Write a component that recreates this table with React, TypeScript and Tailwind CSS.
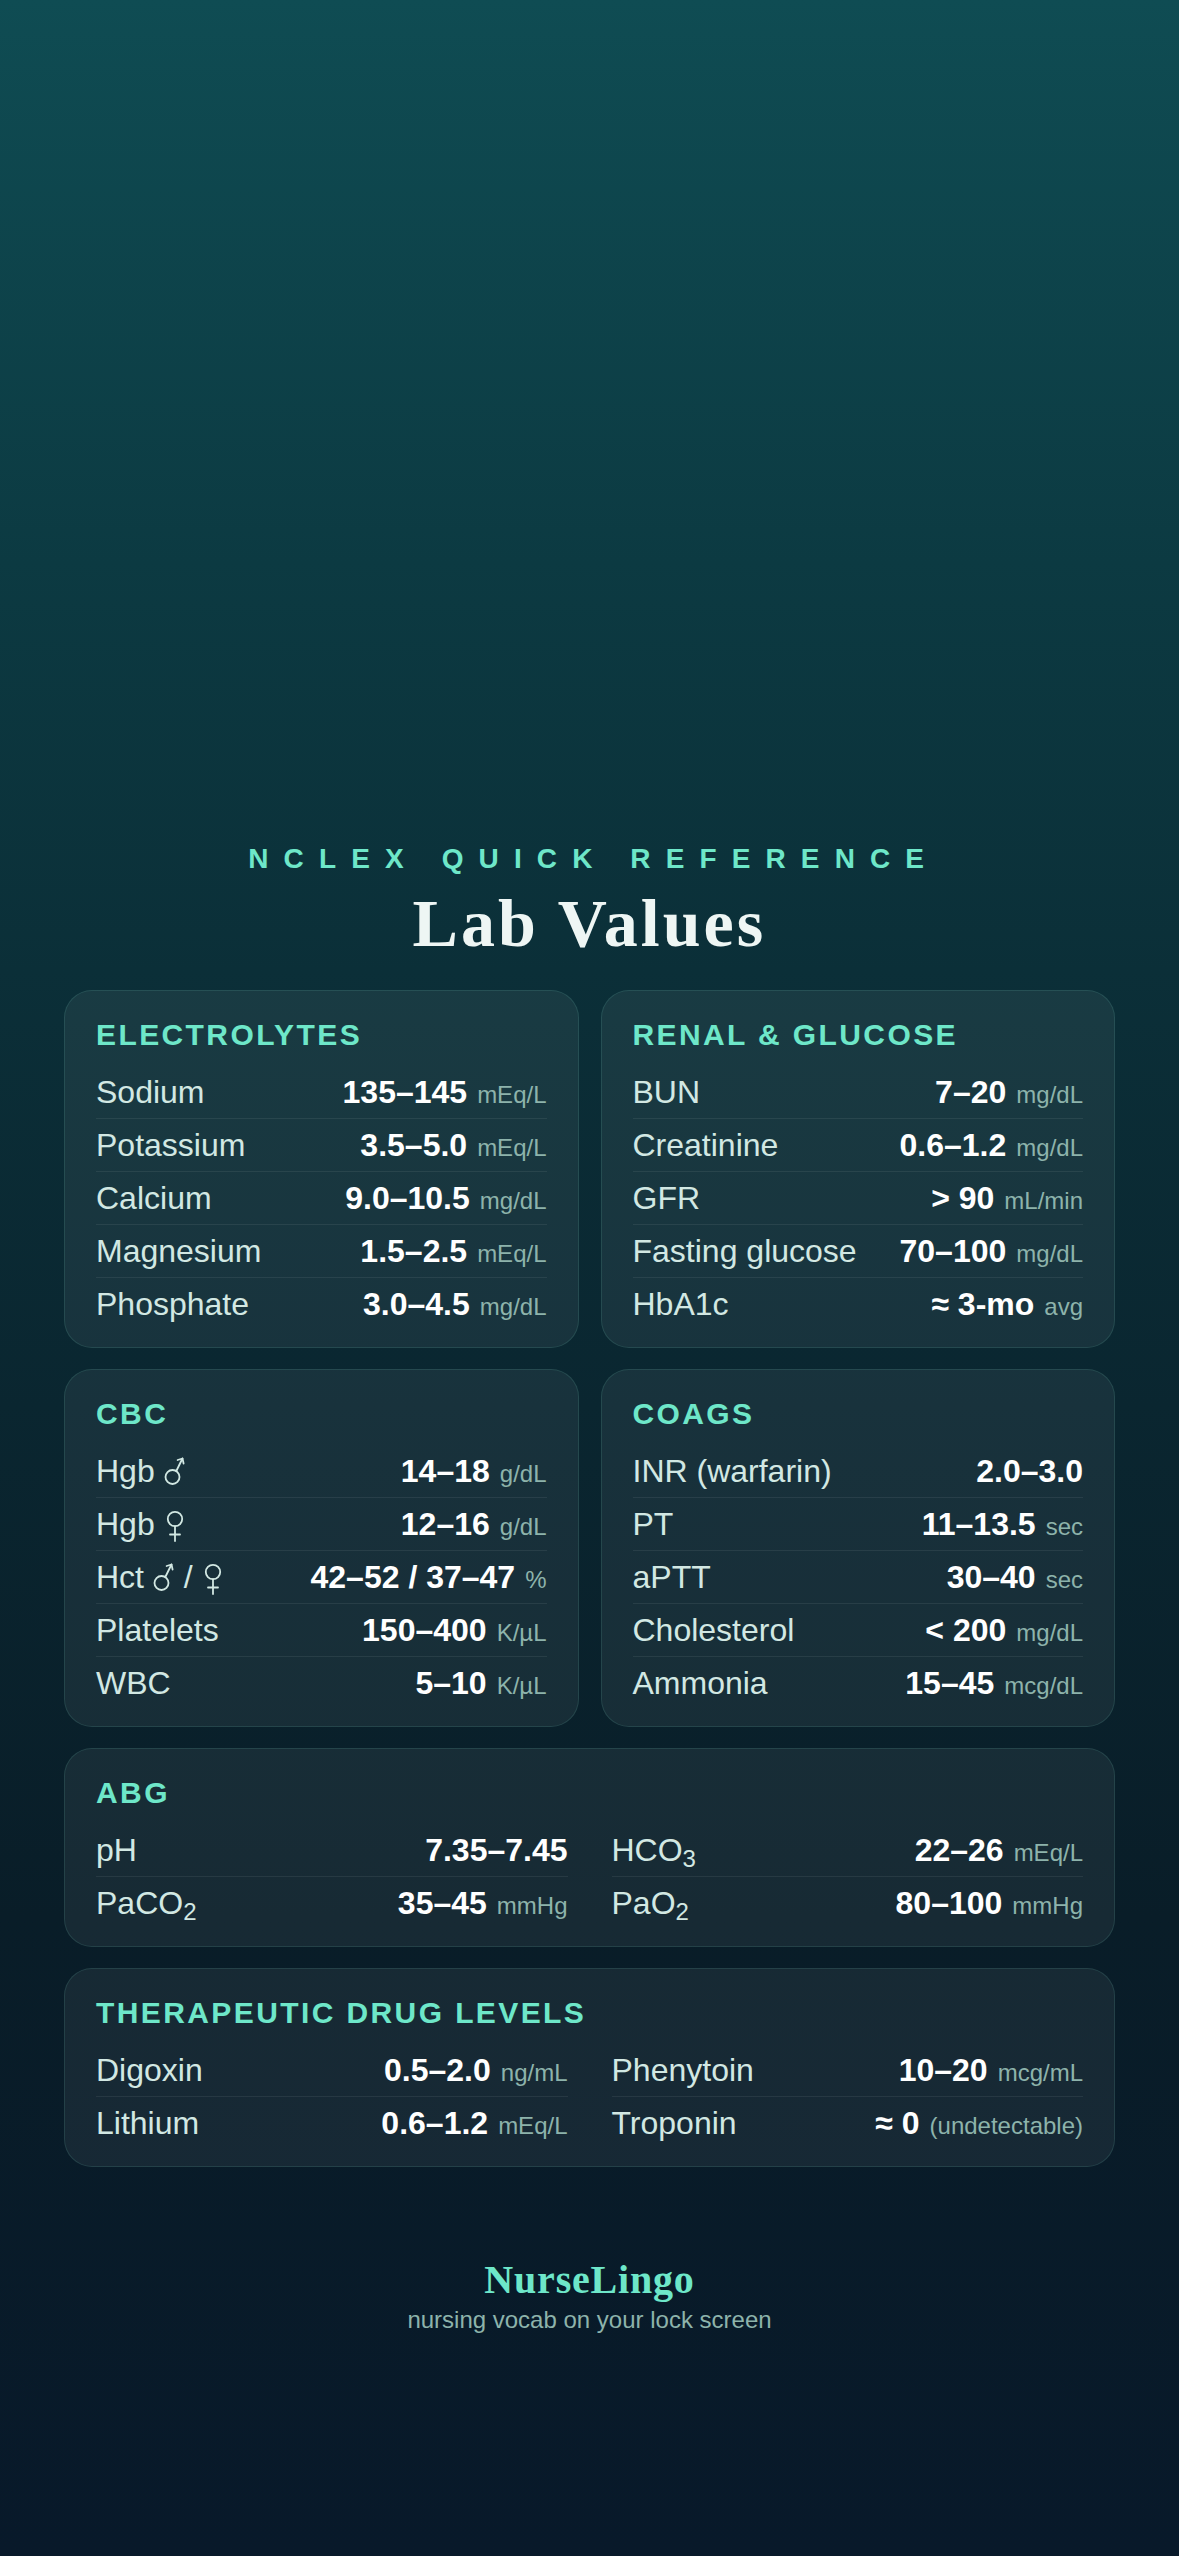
import React from 'react';

type Row = { label: React.ReactNode; value: string; unit?: string };

// thin gender marks, drawn to match the light glyphs in the design
const Male = () => (
    <svg viewBox="0 0 22 30" className="inline-block w-[22px] h-[30px] align-[-4px]" fill="none" stroke="#d2e8e3" strokeWidth="1.8" strokeLinecap="round" strokeLinejoin="round">
        <circle cx="8.5" cy="21" r="7" />
        <path d="M12.3 15 L18.5 2.5" />
        <path d="M13.6 4 L18.5 2.5 L19.6 7.5" />
    </svg>
);

const Female = () => (
    <svg viewBox="0 0 22 32" className="inline-block w-[22px] h-[32px] align-[-7px]" fill="none" stroke="#d2e8e3" strokeWidth="1.8" strokeLinecap="round">
        <circle cx="11" cy="9" r="7.2" />
        <path d="M11 16.2 V31" />
        <path d="M6 24.5 H16" />
    </svg>
);

const topCards: { title: string; rows: Row[] }[] = [
    {
        title: 'ELECTROLYTES',
        rows: [
            { label: 'Sodium', value: '135–145', unit: 'mEq/L' },
            { label: 'Potassium', value: '3.5–5.0', unit: 'mEq/L' },
            { label: 'Calcium', value: '9.0–10.5', unit: 'mg/dL' },
            { label: 'Magnesium', value: '1.5–2.5', unit: 'mEq/L' },
            { label: 'Phosphate', value: '3.0–4.5', unit: 'mg/dL' },
        ],
    },
    {
        title: 'RENAL & GLUCOSE',
        rows: [
            { label: 'BUN', value: '7–20', unit: 'mg/dL' },
            { label: 'Creatinine', value: '0.6–1.2', unit: 'mg/dL' },
            { label: 'GFR', value: '> 90', unit: 'mL/min' },
            { label: 'Fasting glucose', value: '70–100', unit: 'mg/dL' },
            { label: 'HbA1c', value: '≈ 3-mo', unit: 'avg' },
        ],
    },
    {
        title: 'CBC',
        rows: [
            { label: <>Hgb <Male /></>, value: '14–18', unit: 'g/dL' },
            { label: <>Hgb <Female /></>, value: '12–16', unit: 'g/dL' },
            { label: <>Hct <Male /> / <Female /></>, value: '42–52 / 37–47', unit: '%' },
            { label: 'Platelets', value: '150–400', unit: 'K/µL' },
            { label: 'WBC', value: '5–10', unit: 'K/µL' },
        ],
    },
    {
        title: 'COAGS',
        rows: [
            { label: 'INR (warfarin)', value: '2.0–3.0' },
            { label: 'PT', value: '11–13.5', unit: 'sec' },
            { label: 'aPTT', value: '30–40', unit: 'sec' },
            { label: 'Cholesterol', value: '< 200', unit: 'mg/dL' },
            { label: 'Ammonia', value: '15–45', unit: 'mcg/dL' },
        ],
    },
];

const abg: Row[] = [
    { label: 'pH', value: '7.35–7.45' },
    { label: <>HCO<sub>3</sub></>, value: '22–26', unit: 'mEq/L' },
    { label: <>PaCO<sub>2</sub></>, value: '35–45', unit: 'mmHg' },
    { label: <>PaO<sub>2</sub></>, value: '80–100', unit: 'mmHg' },
];

const drugs: Row[] = [
    { label: 'Digoxin', value: '0.5–2.0', unit: 'ng/mL' },
    { label: 'Phenytoin', value: '10–20', unit: 'mcg/mL' },
    { label: 'Lithium', value: '0.6–1.2', unit: 'mEq/L' },
    { label: 'Troponin', value: '≈ 0', unit: '(undetectable)' },
];

function LabRow({ row, last }: { row: Row; last: boolean }) {
    return (
        <div className={`flex h-[53px] items-baseline justify-between pt-[6px] text-[32px] leading-[40px] ${last ? '' : 'border-b border-white/[0.07]'}`}>
            <span className="text-[#d2e8e3] whitespace-nowrap">{row.label}</span>
            <span className="whitespace-nowrap">
                <span className="font-bold text-white">{row.value}</span>
                {row.unit && <span className="ml-[10px] text-[24px] leading-[24px] text-[#8db3ab]">{row.unit}</span>}
            </span>
        </div>
    );
}

function Card({ title, children }: { title: string; children: React.ReactNode }) {
    return (
        <div className="rounded-[28px] border border-[#7fe0cc]/[0.13] bg-white/[0.06] px-[31px] pt-[26px] pb-[16px]">
            <h2 className="mb-[13px] text-[30px] leading-[36px] font-bold tracking-[0.08em] text-[#6ee7c9]">{title}</h2>
            {children}
        </div>
    );
}

export default function App() {
    return (
        <main className="min-h-[2556px] w-full bg-[linear-gradient(180deg,#0f4c53_0%,#0c3a42_22%,#0b2f38_38%,#0a2630_55%,#091d28_75%,#08192a_100%)] font-['Liberation_Sans',Arial,sans-serif] flex flex-col items-center pt-[842px] px-[64px]">

            {/* header */}
            <p className="text-[28px] leading-[34px] font-bold tracking-[0.54em] pl-[0.3em] text-[#6ee7c9]">NCLEX QUICK REFERENCE</p>
            <h1 className="mt-[9px] text-[68px] leading-[76px] font-bold tracking-[0.045em] text-[#eef6f4] font-['Liberation_Serif',Georgia,serif]">Lab Values</h1>

            {/* cards */}
            <div className="mt-[29px] w-full flex flex-col gap-[21px]">
                <div className="grid grid-cols-2 gap-x-[22px] gap-y-[21px]">
                    {topCards.map((c) => (
                        <Card key={c.title} title={c.title}>
                            {c.rows.map((r, i) => (
                                <LabRow key={i} row={r} last={i === c.rows.length - 1} />
                            ))}
                        </Card>
                    ))}
                </div>

                <Card title="ABG">
                    <div className="grid grid-cols-2 gap-x-[44px]">
                        {abg.map((r, i) => (
                            <LabRow key={i} row={r} last={i >= 2} />
                        ))}
                    </div>
                </Card>

                <Card title="THERAPEUTIC DRUG LEVELS">
                    <div className="grid grid-cols-2 gap-x-[44px]">
                        {drugs.map((r, i) => (
                            <LabRow key={i} row={r} last={i >= 2} />
                        ))}
                    </div>
                </Card>
            </div>

            {/* footer */}
            <div className="mt-[89px] flex flex-col items-center">
                <p className="text-[40px] leading-[48px] font-bold tracking-[0.02em] text-[#6ee7c9] font-['Liberation_Serif',Georgia,serif]">NurseLingo</p>
                <p className="mt-[1px] text-[24px] leading-[30px] text-[#8db3ab]">nursing vocab on your lock screen</p>
            </div>
        </main>
    );
}
